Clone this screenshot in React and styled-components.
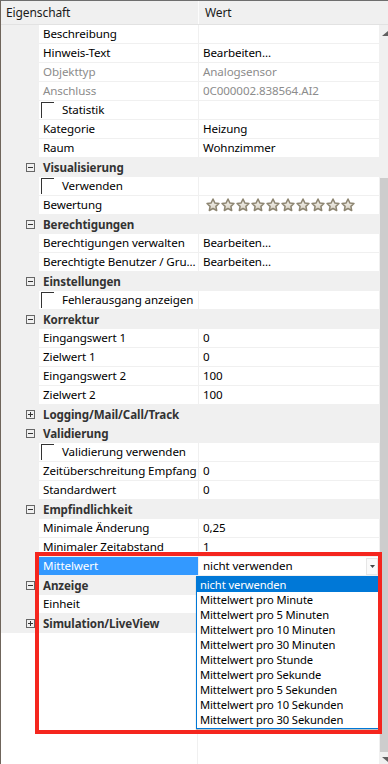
import React from 'react';
import styled, { createGlobalStyle } from 'styled-components';

const Global = createGlobalStyle`
  html, body { margin: 0; padding: 0; background: #fff; }
  body { font-family: "Noto Sans", "Open Sans", sans-serif; }
  * { box-sizing: border-box; }
`;

const Frame = styled.div`
  position: relative;
  width: 388px;
  height: 764px;
  overflow: hidden;
  background: #fff;
  border-top: 1px solid #6e6e6e;
  border-left: 1px solid #6f655b;
  display: flex;
  flex-direction: column;
  font-size: 11.6px;
  letter-spacing: -0.1px;
  color: #000;
`;

const Header = styled.div`
  flex: none;
  display: grid;
  grid-template-columns: 198px 1fr;
  height: 24px;
  background: #f0f0f0;
  border-bottom: 1px solid #e2e2e2;
`;

const HeaderCell = styled.div`
  padding-left: ${p => p.$pad}px;
  line-height: 23px;
  font-size: 12px;
  color: #1a1a1a;
  border-right: ${p => (p.$sep ? '1px solid #fcfcfc' : 'none')};
`;

const Body = styled.div`
  flex: 1;
  display: flex;
  min-height: 0;
`;

const Grid = styled.div`
  width: 378px;
  display: flex;
  flex-direction: column;
`;

const Row = styled.div`
  flex: none;
  display: grid;
  grid-template-columns: 38px 160px 1fr;
  height: 19px;
`;

const Gutter = styled.div`
  background: #f0f0f0;
  display: flex;
  align-items: center;
  justify-content: flex-end;
  padding-right: 4px;
`;

const Toggle = styled.div`
  position: relative;
  width: 9px;
  height: 9px;
  border: 1px solid #666;
  &::before {
    content: '';
    position: absolute;
    left: 1px;
    top: 3px;
    width: 5px;
    height: 1px;
    background: #333;
  }
  &::after {
    content: '';
    display: ${p => (p.$open ? 'none' : 'block')};
    position: absolute;
    left: 3px;
    top: 1px;
    width: 1px;
    height: 5px;
    background: #333;
  }
`;

const CategoryCell = styled.div`
  grid-column: 2 / 4;
  background: #f0f0f0;
  padding-left: 4px;
  line-height: 19px;
  font-weight: 700;
  color: #333;
  white-space: nowrap;
`;

const LabelCell = styled.div`
  display: flex;
  align-items: center;
  padding-left: ${p => (p.$check ? 2 : 4)}px;
  background: ${p => (p.$selected ? '#3399ff' : '#fff')};
  color: ${p => (p.$selected ? '#fff' : p.$disabled ? '#8c8c8c' : '#000')};
  border-bottom: 1px solid #f0f0f0;
  border-right: 1px solid #f0f0f0;
  white-space: nowrap;
  overflow: hidden;
  line-height: 18px;
`;

const ValueCell = styled.div`
  display: flex;
  align-items: center;
  padding-left: 4px;
  color: ${p => (p.$disabled ? '#8c8c8c' : '#000')};
  background: #fff;
  border-bottom: 1px solid #f0f0f0;
  white-space: nowrap;
  overflow: hidden;
  line-height: 18px;
`;

const ValueText = styled.span`
  flex: 1;
`;

const CheckBox = styled.span`
  flex: none;
  align-self: flex-start;
  width: 13px;
  height: 16px;
  margin-top: 1px;
  margin-right: 8px;
  border-top: 1px solid #333;
  border-left: 1px solid #333;
`;

const Stars = styled.div`
  display: flex;
  gap: 1px;
  margin-left: 3px;
`;

const DropButton = styled.div`
  flex: none;
  width: 12px;
  height: 17px;
  margin-right: 1px;
  border: 1px solid #e6e6e6;
  background: #fafafa;
  display: flex;
  align-items: center;
  justify-content: center;
`;

const Filler = styled.div`
  flex: 1;
  display: grid;
  grid-template-columns: 197px 1fr;
`;

const FillerLeft = styled.div`
  border-right: 1px solid #f0f0f0;
`;

const Scrollbar = styled.div`
  width: 9px;
  background: #f0f0f0;
  padding-left: 1px;
  display: flex;
  flex-direction: column;
  align-items: stretch;
`;

const ArrowBox = styled.div`
  height: ${p => p.$h}px;
  display: flex;
  align-items: ${p => (p.$down ? 'flex-end' : 'center')};
  justify-content: flex-end;
`;

const Thumb = styled.div`
  margin-top: ${p => p.$top}px;
  height: ${p => p.$h}px;
  background: #cdcdcd;
`;

const DropList = styled.div`
  position: absolute;
  left: 195px;
  top: 575px;
  width: 183px;
  height: 153px;
  background: #fff;
  border: 1px solid #0078d7;
  box-shadow: 0 1px 1px rgba(0, 0, 0, 0.25);
  display: flex;
  flex-direction: column;
`;

const DropItem = styled.div`
  height: 15px;
  line-height: 15px;
  padding-left: 3px;
  font-size: 11.2px;
  letter-spacing: -0.1px;
  white-space: nowrap;
  overflow: hidden;
  background: ${p => (p.$active ? '#0078d7' : 'transparent')};
  color: ${p => (p.$active ? '#fff' : '#000')};
`;

const Marker = styled.div`
  position: absolute;
  left: 34px;
  top: 551px;
  width: 347px;
  height: 182px;
  border: 4px solid #f5261e;
  pointer-events: none;
`;

const Star = () => (
  <svg width="14" height="14" viewBox="0 0 24 24">
    <defs>
      <linearGradient id="sg" x1="0" y1="0" x2="0" y2="1">
        <stop offset="0" stopColor="#f7f5f0" />
        <stop offset="1" stopColor="#d8d2c4" />
      </linearGradient>
    </defs>
    <path
      d="M12 1.8l3.1 6.6 7.1.9-5.2 5 1.3 7.1L12 18l-6.3 3.4 1.3-7.1-5.2-5 7.1-.9z"
      fill="url(#sg)"
      stroke="#8e8672"
      strokeWidth="2.6"
      strokeLinejoin="round"
    />
  </svg>
);

const rows = [
  { label: 'Beschreibung', value: '' },
  { label: 'Hinweis-Text', value: 'Bearbeiten...' },
  { label: 'Objekttyp', value: 'Analogsensor', disabled: true },
  { label: 'Anschluss', value: '0C000002.838564.AI2', disabled: true },
  { type: 'check', label: 'Statistik' },
  { label: 'Kategorie', value: 'Heizung' },
  { label: 'Raum', value: 'Wohnzimmer' },
  { type: 'cat', label: 'Visualisierung', open: true },
  { type: 'check', label: 'Verwenden' },
  { label: 'Bewertung', stars: true },
  { type: 'cat', label: 'Berechtigungen', open: true },
  { label: 'Berechtigungen verwalten', value: 'Bearbeiten...' },
  { label: 'Berechtigte Benutzer / Gru...', value: 'Bearbeiten...' },
  { type: 'cat', label: 'Einstellungen', open: true },
  { type: 'check', label: 'Fehlerausgang anzeigen' },
  { type: 'cat', label: 'Korrektur', open: true },
  { label: 'Eingangswert 1', value: '0' },
  { label: 'Zielwert 1', value: '0' },
  { label: 'Eingangswert 2', value: '100' },
  { label: 'Zielwert 2', value: '100' },
  { type: 'cat', label: 'Logging/Mail/Call/Track', open: false },
  { type: 'cat', label: 'Validierung', open: true },
  { type: 'check', label: 'Validierung verwenden' },
  { label: 'Zeitüberschreitung Empfang', value: '0' },
  { label: 'Standardwert', value: '0' },
  { type: 'cat', label: 'Empfindlichkeit', open: true },
  { label: 'Minimale Änderung', value: '0,25' },
  { label: 'Minimaler Zeitabstand', value: '1' },
  { label: 'Mittelwert', value: 'nicht verwenden', selected: true, combo: true },
  { type: 'cat', label: 'Anzeige', open: true },
  { label: 'Einheit', value: '' },
  { type: 'cat', label: 'Simulation/LiveView', open: false },
];

const options = [
  'nicht verwenden',
  'Mittelwert pro Minute',
  'Mittelwert pro 5 Minuten',
  'Mittelwert pro 10 Minuten',
  'Mittelwert pro 30 Minuten',
  'Mittelwert pro Stunde',
  'Mittelwert pro Sekunde',
  'Mittelwert pro 5 Sekunden',
  'Mittelwert pro 10 Sekunden',
  'Mittelwert pro 30 Sekunden',
];

function PropRow({ r }) {
  if (r.type === 'cat') {
    return (
      <Row>
        <Gutter>
          <Toggle $open={r.open} />
        </Gutter>
        <CategoryCell>{r.label}</CategoryCell>
      </Row>
    );
  }
  return (
    <Row>
      <Gutter />
      <LabelCell $check={r.type === 'check'} $selected={r.selected} $disabled={r.disabled}>
        {r.type === 'check' && <CheckBox />}
        {r.label}
      </LabelCell>
      <ValueCell $disabled={r.disabled}>
        {r.stars ? (
          <Stars>
            {Array.from({ length: 10 }).map((_, i) => (
              <Star key={i} />
            ))}
          </Stars>
        ) : (
          <ValueText>{r.value}</ValueText>
        )}
        {r.combo && (
          <DropButton>
            <svg width="5" height="3" viewBox="0 0 5 3">
              <path d="M0 0h5L2.5 3z" fill="#444" />
            </svg>
          </DropButton>
        )}
      </ValueCell>
    </Row>
  );
}

export default function App() {
  return (
    <>
      <Global />
      <Frame>
        <Header>
          <HeaderCell $pad={5} $sep>Eigenschaft</HeaderCell>
          <HeaderCell $pad={6}>Wert</HeaderCell>
        </Header>
        <Body>
          <Grid>
            {rows.map((r, i) => (
              <PropRow key={i} r={r} />
            ))}
            <Filler>
              <FillerLeft />
              <div />
            </Filler>
          </Grid>
          <Scrollbar>
            <ArrowBox $h={17}>
              <svg width="6" height="5" viewBox="0 0 6 5">
                <path d="M0 5L6 0v5z" fill="#606060" />
              </svg>
            </ArrowBox>
            <Thumb $top={136} $h={574} />
            <ArrowBox $h={10} $down>
              <svg width="6" height="5" viewBox="0 0 6 5">
                <path d="M0 0l6 5V0z" fill="#606060" />
              </svg>
            </ArrowBox>
          </Scrollbar>
        </Body>
        <DropList>
          {options.map((o, i) => (
            <DropItem key={o} $active={i === 0}>
              {o}
            </DropItem>
          ))}
        </DropList>
        <Marker />
      </Frame>
    </>
  );
}
